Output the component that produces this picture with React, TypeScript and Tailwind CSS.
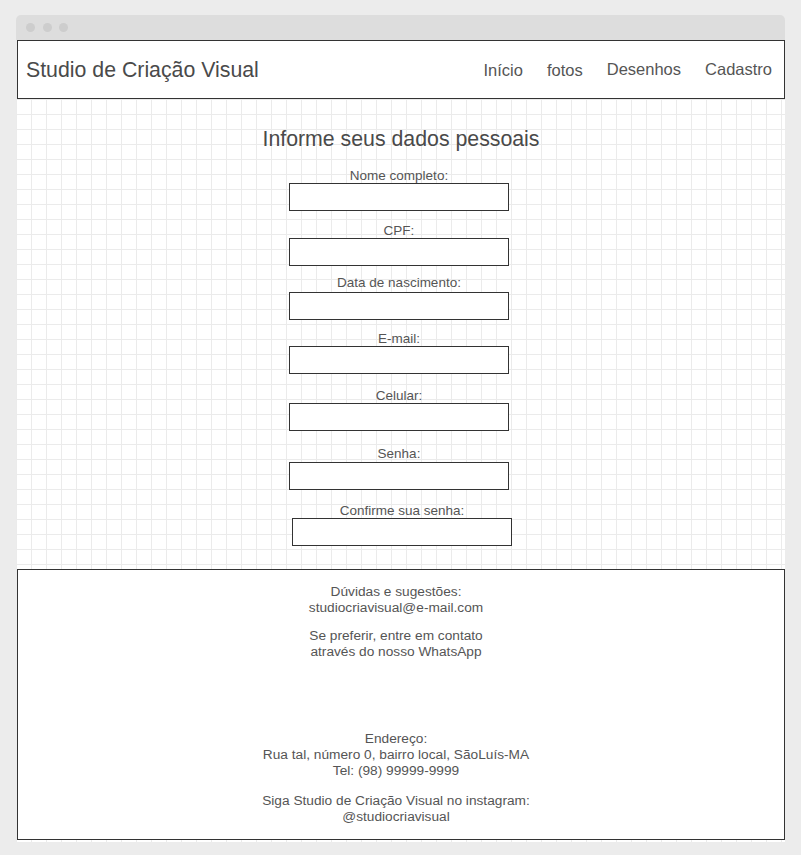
const fields = [
  { label: "Nome completo:", mt: "mt-[18px]", gap: "", ml: "ml-[272px]" },
  { label: "CPF:", mt: "mt-[13px]", gap: "", ml: "ml-[272px]" },
  { label: "Data de nascimento:", mt: "mt-[10px]", gap: "mb-[2px]", ml: "ml-[272px]" },
  { label: "E-mail:", mt: "mt-[12px]", gap: "", ml: "ml-[272px]" },
  { label: "Celular:", mt: "mt-[15px]", gap: "", ml: "ml-[272px]" },
  { label: "Senha:", mt: "mt-[16px]", gap: "mb-px", ml: "ml-[272px]" },
  { label: "Confirme sua senha:", mt: "mt-[14px]", gap: "", ml: "ml-[275px]" },
];

function Field({ label, mt, gap, ml }: { label: string; mt: string; gap: string; ml: string }) {
  return (
    <div className={`${mt} ${ml} w-[220px] flex flex-col`}>
      <span className={`text-center text-[13.5px] leading-[14px] text-[#555] ${gap}`}>{label}</span>
      <div className="h-[28px] w-[220px] border border-[#333] bg-white"></div>
    </div>
  );
}

export default function App() {
  return (
    <div className="h-[855px] bg-[#ececec] pt-[15px] pl-[16px] font-['Liberation_Sans',Arial,sans-serif]">
      <div className="w-[769px]">
        <div className="h-[25px] bg-[#dddddd] rounded-t-[5px] flex items-center gap-[7.5px] pl-[10px]">
          <span className="w-[9px] h-[9px] rounded-full bg-[#cdcdcd]"></span>
          <span className="w-[9px] h-[9px] rounded-full bg-[#cdcdcd]"></span>
          <span className="w-[9px] h-[9px] rounded-full bg-[#cdcdcd]"></span>
        </div>

        <div className="pb-[2px] bg-white bg-[linear-gradient(to_right,#ebebeb_1px,transparent_1px),linear-gradient(to_bottom,#ebebeb_1px,transparent_1px)] bg-[size:15px_15px] bg-[position:0_-1px]">
          <header className="ml-px w-[768px] h-[59px] border border-[#333] bg-white flex items-center justify-between pl-[8px] pr-[12px]">
            <span className="mt-[2px] text-[21.3px] text-[#4a4a4a]">Studio de Criação Visual</span>
            <nav className="flex items-center gap-[24px] text-[16.5px] text-[#555]">
              <span className="mt-[2px]">Início</span>
              <span className="mt-[2px]">fotos</span>
              <span>Desenhos</span>
              <span>Cadastro</span>
            </nav>
          </header>

          <main className="ml-px w-[768px] h-[470px] pt-[28px]">
            <h1 className="text-center text-[21.3px] leading-[24px] text-[#4a4a4a]">Informe seus dados pessoais</h1>
            {fields.map((f) => (
              <Field key={f.label} {...f} />
            ))}
          </main>

          <footer className="ml-px w-[768px] h-[271px] border border-[#333] bg-white pt-[14px] pr-[10px] text-center text-[13.7px] leading-[16px] text-[#555]">
            <p>Dúvidas e sugestões:</p>
            <p>studiocriavisual@e-mail.com</p>
            <p className="mt-[12px]">Se preferir, entre em contato</p>
            <p>através do nosso WhatsApp</p>
            <p className="mt-[71px]">Endereço:</p>
            <p>Rua tal, número 0, bairro local, SãoLuís-MA</p>
            <p>Tel: (98) 99999-9999</p>
            <p className="mt-[14px]">Siga Studio de Criação Visual no instagram:</p>
            <p>@studiocriavisual</p>
          </footer>
        </div>
      </div>
    </div>
  );
}
